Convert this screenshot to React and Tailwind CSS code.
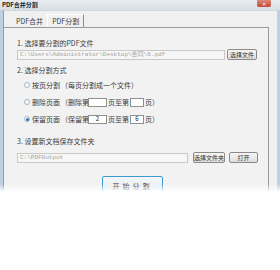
import React from 'react';

const cjk = '"Noto Sans CJK SC", "Noto Sans", sans-serif';
const mono = '"Liberation Mono", "Noto Sans CJK SC", monospace';

function Radio({ checked }) {
  return (
    <span className="w-[6px] h-[6px] rounded-full border border-[#9fb4c8] bg-white flex items-center justify-center shrink-0">
      {checked && <span className="w-[3px] h-[3px] rounded-full bg-[#2c6fb6]" />}
    </span>
  );
}

function SmallBox({ w, value }) {
  return (
    <span className={`${w} h-[9px] border border-[#8e8f8f] bg-white flex items-center justify-center text-[6px] leading-none text-[#222]`}>
      {value}
    </span>
  );
}

function Btn({ w, children }) {
  return (
    <button className={`${w} h-[11px] rounded-[2px] border border-[#8a8a8a] bg-gradient-to-b from-[#f6f6f6] to-[#dddddd] text-[6px] leading-none text-[#333] flex items-center justify-center`}>
      {children}
    </button>
  );
}

export default function App() {
  return (
    <div className="relative w-[280px] h-[270px] overflow-hidden bg-white text-[#3c3c3c]" style={{ fontFamily: cjk }}>
      <div className="h-full flex flex-col bg-[#bfd0e2]">
        {/* title bar */}
        <div className="h-[10px] flex items-center justify-between pl-[2px] pr-[9px] bg-gradient-to-b from-[#e8ecf0] to-[#d9dfe6]">
          <span className="text-[6px] font-bold leading-none text-[#1c1c1c]">PDF合并分割</span>
          <span className="w-[14px] h-[7px] -mt-[3px] rounded-b-[2px] bg-gradient-to-b from-[#e08a7c] to-[#c2432f] flex items-center justify-center text-[5px] leading-none text-white">✕</span>
        </div>

        <div className="flex-1 flex flex-col ml-[3px] mr-[3px] border-l border-t border-l-[#9a9a9a] border-t-[#cfd7df] bg-[#f0f0f0]">
          {/* tabs */}
          <div className="h-[16px] flex items-end pl-[8px]">
            <div className="h-[12px] px-[4px] flex items-center text-[7px] leading-none">PDF合并</div>
            <div className="h-[13px] px-[4px] flex items-center border-r border-[#8c8c8c] border-t border-l border-t-white border-l-white text-[7px] leading-none">PDF分割</div>
          </div>

          {/* panel */}
          <div className="flex-1 mr-[8px] border-t border-r border-[#9a9a9a] bg-[#f2f2f2] pl-[13px] pr-[10px] pt-[10px] text-[7px] leading-[10px]">
            <div>1. 选择要分割的PDF文件</div>
            <div className="mt-[1px] flex items-center gap-[2px]">
              <div className="w-[208px] h-[10px] border border-[#c9c9c9] bg-[#f6f6f6] px-[2px] flex items-center text-[6px] leading-none text-[#a2a2a2] whitespace-nowrap overflow-hidden" style={{ fontFamily: mono }}>
                C:\Users\Administrator\Desktop\合同\6.pdf
              </div>
              <Btn w="w-[30px]">选择文件</Btn>
            </div>

            <div className="mt-[5px]">2. 选择分割方式</div>
            <div className="mt-[5px] pl-[7px] flex flex-col gap-[7px]">
              <div className="h-[10px] flex items-center">
                <Radio />
                <span className="w-[30px] ml-[1px] pl-[1px] whitespace-nowrap">按页分割</span>
                <span className="whitespace-nowrap">（每页分割成一个文件）</span>
              </div>
              <div className="h-[10px] flex items-center">
                <Radio />
                <span className="w-[30px] ml-[1px] pl-[1px] whitespace-nowrap">删除页面</span>
                <span className="w-[27px] whitespace-nowrap">（删除第</span>
                <SmallBox w="w-[19px]" value="" />
                <span className="w-[23px] pl-px whitespace-nowrap">页至第</span>
                <SmallBox w="w-[14px]" value="" />
                <span className="pl-px whitespace-nowrap">页）</span>
              </div>
              <div className="h-[10px] flex items-center">
                <Radio checked />
                <span className="w-[30px] ml-[1px] pl-[1px] whitespace-nowrap">保留页面</span>
                <span className="w-[27px] whitespace-nowrap">（保留第</span>
                <SmallBox w="w-[19px]" value="2" />
                <span className="w-[23px] pl-px whitespace-nowrap">页至第</span>
                <SmallBox w="w-[14px]" value="6" />
                <span className="pl-px whitespace-nowrap">页）</span>
              </div>
            </div>

            <div className="mt-[12px]">3. 设置新文档保存文件夹</div>
            <div className="mt-[6px] flex items-center">
              <div className="w-[173px] h-[10px] border border-[#c9c9c9] bg-[#f6f6f6] px-[2px] flex items-center text-[6px] leading-none text-[#a2a2a2] whitespace-nowrap" style={{ fontFamily: mono }}>
                C:\PDFOutput
              </div>
              <div className="ml-[5px]"><Btn w="w-[32px]">选择文件夹</Btn></div>
              <div className="ml-[4px]"><Btn w="w-[29px]">打开</Btn></div>
            </div>

            <div className="mt-[13px] pl-[85px]">
              <button className="w-[61px] h-[20px] rounded-[2px] border border-[#3c9ad3] bg-gradient-to-b from-[#f4f8fb] to-[#dde6ee] text-[7px] leading-none text-[#333] tracking-[3px]">
                开始分割
              </button>
            </div>
          </div>
        </div>
      </div>

      {/* fade-out over the lower part of the capture */}
      <div className="absolute left-0 right-0 top-[184px] bottom-0 flex flex-col">
        <div className="h-[8px] bg-gradient-to-b from-white/0 to-white" />
        <div className="flex-1 bg-white" />
      </div>
    </div>
  );
}
